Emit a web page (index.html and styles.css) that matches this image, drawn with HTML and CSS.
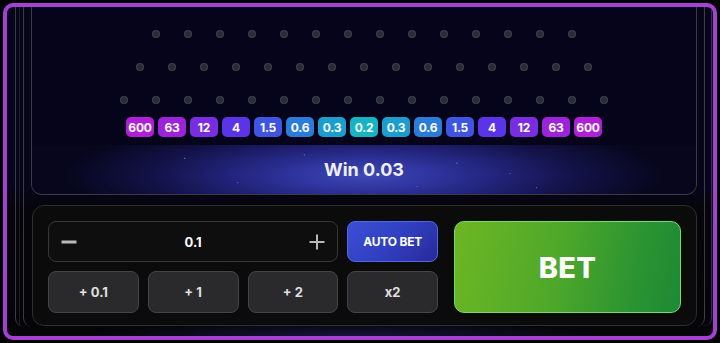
FILE: index.html
```html
<!DOCTYPE html>
<html lang="en">
<head>
<meta charset="utf-8">
<title>Plinko</title>
<link rel="stylesheet" href="styles.css">
</head>
<body>
<div class="frame">
  <div class="rail-a">
    <div class="rail-b">
      <div class="content">
        <section class="game">
          <div class="pegs">
            <div class="peg-row" data-n="14"><i></i><i></i><i></i><i></i><i></i><i></i><i></i><i></i><i></i><i></i><i></i><i></i><i></i><i></i></div>
            <div class="peg-row"><i></i><i></i><i></i><i></i><i></i><i></i><i></i><i></i><i></i><i></i><i></i><i></i><i></i><i></i><i></i></div>
            <div class="peg-row"><i></i><i></i><i></i><i></i><i></i><i></i><i></i><i></i><i></i><i></i><i></i><i></i><i></i><i></i><i></i><i></i></div>
          </div>
          <div class="mults">
            <span class="m m1">600</span>
            <span class="m m2">63</span>
            <span class="m m3">12</span>
            <span class="m m4">4</span>
            <span class="m m5">1.5</span>
            <span class="m m6">0.6</span>
            <span class="m m7">0.3</span>
            <span class="m m8">0.2</span>
            <span class="m m7">0.3</span>
            <span class="m m6">0.6</span>
            <span class="m m5">1.5</span>
            <span class="m m4">4</span>
            <span class="m m3">12</span>
            <span class="m m2">63</span>
            <span class="m m1">600</span>
          </div>
          <div class="win">Win 0.03</div>
        </section>
        <section class="controls">
          <div class="grid">
            <div class="amount">
              <svg class="ico" width="16" height="16" viewBox="0 0 16 16"><line x1="0.5" y1="8" x2="15.5" y2="8" stroke="#b9b9b9" stroke-width="3"/></svg>
              <span class="val">0.1</span>
              <svg class="ico" width="16" height="16" viewBox="0 0 16 16"><line x1="0.5" y1="8" x2="15.5" y2="8" stroke="#b9b9b9" stroke-width="2"/><line x1="8" y1="0.5" x2="8" y2="15.5" stroke="#b9b9b9" stroke-width="2"/></svg>
            </div>
            <button class="auto">AUTO BET</button>
            <button class="chip">+ 0.1</button>
            <button class="chip">+ 1</button>
            <button class="chip">+ 2</button>
            <button class="chip">x2</button>
          </div>
          <button class="bet">BET</button>
        </section>
      </div>
    </div>
  </div>
</div>
</body>
</html>
```
FILE: styles.css
```css
* { box-sizing: border-box; }
html, body { margin: 0; padding: 0; background: #000; }
body { font-family: Inter, "Noto Sans", "Liberation Sans", sans-serif; color: #fff; }

.frame {
  margin: 3px;
  width: 714px;
  height: 337px;
  border: 4px solid #a540d5;
  border-radius: 10px;
  background:
    radial-gradient(ellipse 260px 14px at 48% 100%, #16123a 0%, rgba(22,18,58,0) 100%),
    linear-gradient(to bottom, #06051a 0%, #06051a 55%, #060509 62%, #050507 100%);
  overflow: hidden;
}

.rail-a {
  height: 319px;
  margin: 0 1px 0 8px;
  border-left: 1px solid #3c3c46;
  border-right: 1px solid #33333d;
  border-bottom-left-radius: 8px;
  border-bottom-right-radius: 8px;
  background: linear-gradient(to right, transparent 3px, #1d1d26 3px, #1d1d26 4px, transparent 4px) no-repeat;
}

.rail-b {
  height: 100%;
  margin: 0 6px 0 7px;
  border-left: 1px solid #3c3c46;
  border-right: 1px solid #3c3c46;
  border-bottom-left-radius: 8px;
  border-bottom-right-radius: 8px;
}

.content {
  padding: 0 7px 0 7px;
}

.game {
  height: 188px;
  border: 1px solid #3a3a42;
  border-top: none;
  border-radius: 0 0 11px 11px;
  background: #05041a;
  padding-top: 23px;
  display: flex;
  flex-direction: column;
  align-items: center;
  overflow: hidden;
}

.pegs {
  display: flex;
  flex-direction: column;
  align-items: center;
  gap: 25px;
}
.peg-row {
  display: flex;
  gap: 24px;
  height: 8px;
}
.peg-row i {
  display: block;
  width: 8px;
  height: 8px;
  border-radius: 50%;
  background: radial-gradient(circle at 50% 50%, #262833 0%, #2c2f3a 45%, #474a58 80%, #2e303a 100%);
}

.mults {
  margin-top: 13px;
  display: flex;
  gap: 4px;
}
.m {
  width: 28px;
  height: 20px;
  border-radius: 5px;
  display: flex;
  align-items: center;
  justify-content: center;
  font-size: 12px;
  font-weight: 700;
  letter-spacing: -0.2px;
  color: #fff;
}
.m1 { background: #b01ed7; }
.m2 { background: #9c23d9; }
.m3 { background: #7a2ce1; }
.m4 { background: #5b34e8; }
.m5 { background: #3f54e0; }
.m6 { background: #2b7cd9; }
.m7 { background: #1b9ecd; }
.m8 { background: #14b4c4; }

.win {
  margin-top: 8px;
  align-self: stretch;
  height: 49px;
  display: flex;
  align-items: center;
  justify-content: center;
  font-size: 18px;
  font-weight: 700;
  color: #eef0ff;
  background:
    radial-gradient(circle 1px at 23% 27%, #8a8ee8 0%, transparent 100%),
    radial-gradient(circle 1px at 31% 77%, #6f74d8 0%, transparent 100%),
    radial-gradient(circle 1px at 41% 20%, #7a80e0 0%, transparent 100%),
    radial-gradient(circle 1px at 58% 85%, #6f74d8 0%, transparent 100%),
    radial-gradient(circle 1px at 64% 37%, #8a8ee8 0%, transparent 100%),
    radial-gradient(circle 1px at 72% 58%, #6f74d8 0%, transparent 100%),
    radial-gradient(circle 1px at 76% 87%, #5f64c8 0%, transparent 100%),
    radial-gradient(ellipse 300px 60px at 50% 62%, #4048b4 0%, #3035a0 22%, #222379 45%, #131248 70%, rgba(8,7,30,0) 100%),
    #07061c;
}

.controls {
  margin: 10px 0 0 1px;
  height: 121px;
  border: 1px solid #2e2e31;
  border-radius: 12px;
  background: #0b0b0c;
  padding: 15px;
  display: flex;
  gap: 16px;
}

.grid {
  width: 390px;
  display: grid;
  grid-template-columns: repeat(4, 1fr);
  grid-template-rows: 41px 42px;
  column-gap: 9px;
  row-gap: 9px;
}

.amount {
  grid-column: 1 / span 3;
  border: 1px solid #38383b;
  border-radius: 8px;
  background: #0e0e0f;
  display: flex;
  align-items: center;
  justify-content: space-between;
  padding: 0 12px;
}
.ico { display: block; }
.val {
  font-size: 13px;
  font-weight: 700;
  color: #fff;
}

button {
  font-family: inherit;
  cursor: pointer;
  margin: 0;
  padding: 0;
}

.auto {
  border: 1px solid #5566e8;
  border-radius: 8px;
  background: linear-gradient(135deg, #3c4ed6 0%, #3140c0 50%, #272a98 100%);
  color: #fff;
  font-size: 12px;
  font-weight: 700;
  letter-spacing: -0.2px;
}

.chip {
  border: 1px solid #454548;
  border-radius: 8px;
  background: #2a2a2c;
  color: #e0e0e0;
  font-size: 13px;
  font-weight: 700;
}

.bet {
  flex: 1;
  height: 92px;
  border: 1px solid #72dc70;
  border-radius: 10px;
  background: linear-gradient(100deg, #6db624 0%, #4fa82a 45%, #2a9332 80%, #1d8a34 100%);
  color: #fff;
  font-size: 29px;
  font-weight: 800;
  letter-spacing: 0.3px;
}
```
